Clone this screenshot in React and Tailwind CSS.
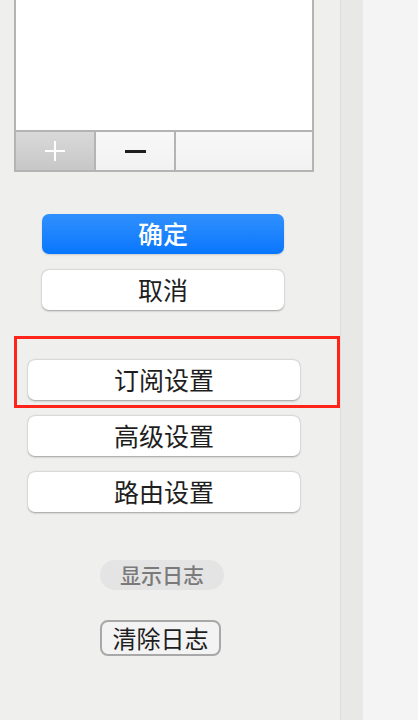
import React from "react";

const font = { fontFamily: '"Noto Sans CJK SC", "Noto Sans", sans-serif' };

export default function App() {
  return (
    <div className="flex h-[720px] w-[418px] overflow-hidden bg-[#f3f4f3]" style={font}>
      <div className="flex w-[340px] shrink-0 flex-col bg-[#efefee]">
        {/* list box */}
        <div className="ml-[14px] flex h-[172px] w-[300px] flex-col border-x-2 border-b-2 border-[#b4b4b4] bg-white">
          <div className="flex-1 bg-white" />
          <div className="flex h-[40px] border-t-2 border-[#b4b4b4]">
            <div className="flex w-[78px] items-center justify-center bg-gradient-to-b from-[#d9d9d9] to-[#c7c7c7]">
              <svg width="22" height="22" viewBox="0 0 22 22">
                <path d="M11 1v20M1 11h20" stroke="#ffffff" strokeWidth="2" />
              </svg>
            </div>
            <div className="w-[2px] bg-[#b4b4b4]" />
            <div className="flex w-[78px] items-center justify-center bg-gradient-to-b from-[#f8f8f8] to-[#f2f2f2]">
              <div className="h-[3px] w-[21px] bg-[#1e1e1e]" />
            </div>
            <div className="w-[2px] bg-[#b4b4b4]" />
            <div className="flex-1 bg-gradient-to-b from-[#f8f8f8] to-[#f2f2f2]" />
          </div>
        </div>

        <button className="ml-[42px] mt-[42px] flex h-[40px] w-[242px] items-center justify-center rounded-[7px] bg-gradient-to-b from-[#2f90fc] to-[#0576fe] pb-[2px] text-[25px] font-medium leading-none text-white shadow-[0_1px_2px_rgba(0,0,0,0.15)]">
          确定
        </button>
        <button className="ml-[42px] mt-[16px] flex h-[40px] w-[242px] items-center justify-center rounded-[7px] bg-white pb-[2px] text-[25px] leading-none text-[#1e1e1e] shadow-[0_0.5px_2px_rgba(0,0,0,0.35)]">
          取消
        </button>

        <div className="ml-[14px] mt-[26px] flex h-[72px] w-[326px] flex-col border-[3px] border-[#ff2419]">
          <button className="ml-[11px] mt-[21px] flex h-[40px] w-[272px] items-center justify-center rounded-[7px] bg-white pb-[2px] text-[25px] leading-none text-[#1e1e1e] shadow-[0_0.5px_2px_rgba(0,0,0,0.35)]">
            订阅设置
          </button>
        </div>
        <button className="ml-[28px] mt-[8px] flex h-[40px] w-[272px] items-center justify-center rounded-[7px] bg-white pb-[2px] text-[25px] leading-none text-[#1e1e1e] shadow-[0_0.5px_2px_rgba(0,0,0,0.35)]">
          高级设置
        </button>
        <button className="ml-[28px] mt-[16px] flex h-[40px] w-[272px] items-center justify-center rounded-[7px] bg-white pb-[2px] text-[25px] leading-none text-[#1e1e1e] shadow-[0_0.5px_2px_rgba(0,0,0,0.35)]">
          路由设置
        </button>

        <button className="ml-[100px] mt-[48px] flex h-[30px] w-[124px] items-center justify-center rounded-full bg-[#e4e4e4] pb-[1px] text-[21px] font-medium leading-none text-[#7a7a7a]">
          显示日志
        </button>
        <button className="ml-[100px] mt-[30px] flex h-[36px] w-[121px] items-center justify-center rounded-[8px] border-2 border-[#a8a8a8] bg-[#f3f3f3] pb-[1px] text-[24px] leading-none text-[#1e1e1e]">
          清除日志
        </button>
      </div>
      <div className="w-[23px] shrink-0 border-l border-[#dddddc] bg-[#e8e8e7]" />
      <div className="flex-1 bg-[#f3f4f3]" />
    </div>
  );
}
